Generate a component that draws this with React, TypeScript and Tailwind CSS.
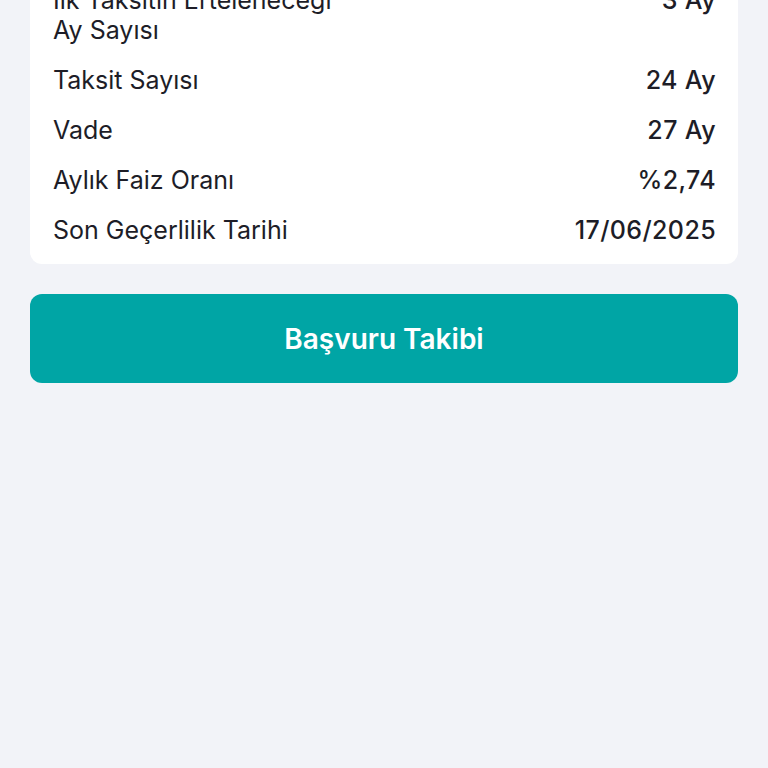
const rows = [
  { label: "İlk Taksitin Erteleneceği Ay Sayısı", value: "3 Ay" },
  { label: "Taksit Sayısı", value: "24 Ay" },
  { label: "Vade", value: "27 Ay" },
  { label: "Aylık Faiz Oranı", value: "%2,74" },
  { label: "Son Geçerlilik Tarihi", value: "17/06/2025" },
];

export default function App() {
  return (
    <div
      className="h-[768px] overflow-hidden bg-[#f2f3f8] px-[30px]"
      style={{ fontFamily: "Inter, 'Open Sans', sans-serif" }}
    >
      {/* Details card */}
      <div className="-mt-[35px] rounded-[12px] bg-white px-[23px] pt-[20px] pb-[19px]">
        <div className="flex flex-col gap-[20px]">
          {rows.map((row) => (
            <div key={row.label} className="flex items-start justify-between">
              <span className="w-[300px] text-[25px] leading-[30px] text-[#1d1d27]">
                {row.label}
              </span>
              <span className="-mr-[1px] shrink-0 text-[25px] leading-[30px] font-medium tracking-[0.015em] text-[#1d1d27]">
                {row.value}
              </span>
            </div>
          ))}
        </div>
      </div>

      {/* Action */}
      <button className="mt-[30px] flex h-[89px] w-full items-center justify-center rounded-[12px] bg-[#00a5a5] text-[28px] font-semibold text-white">
        Başvuru Takibi
      </button>
    </div>
  );
}
